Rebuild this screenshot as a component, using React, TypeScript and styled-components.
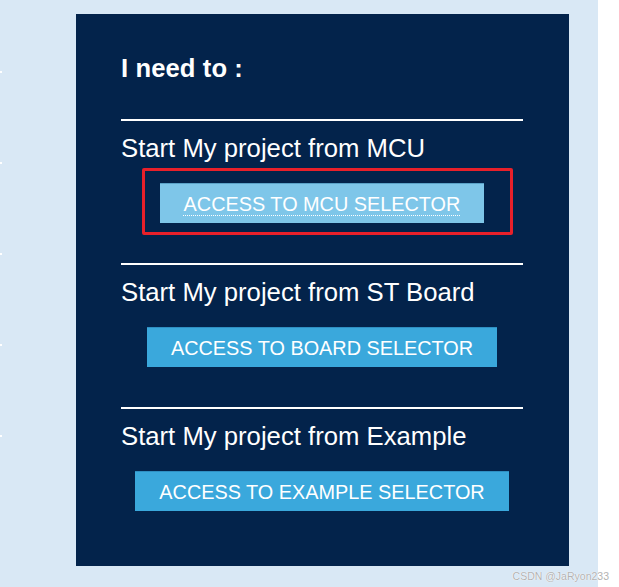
import React from "react";
import styled, { createGlobalStyle } from "styled-components";

const GlobalStyle = createGlobalStyle`
  html, body {
    margin: 0;
    padding: 0;
    background: #ffffff;
  }
  body {
    font-family: "Liberation Sans", Arial, sans-serif;
  }
`;

const Page = styled.div`
  position: relative;
  display: flex;
  width: 619px;
  height: 587px;
  background: #ffffff;
  overflow: hidden;
`;

const Canvas = styled.div`
  display: flex;
  align-items: flex-start;
  width: 598px;
  height: 587px;
  background: #d9e8f5;
`;

const Ticks = styled.div`
  display: flex;
  flex-direction: column;
  gap: 89px;
  width: 2px;
  padding-top: 71px;
`;

const Tick = styled.span`
  display: block;
  width: 2px;
  height: 2px;
  background: #ffffff;
`;

const Panel = styled.section`
  box-sizing: border-box;
  width: 493px;
  height: 552px;
  margin: 14px 0 0 74px;
  padding: 39px 46px 0 45px;
  background: #03234b;
  color: #ffffff;
  display: flex;
  flex-direction: column;
`;

const Heading = styled.h2`
  margin: 0 0 36px;
  font-size: 25.6px;
  line-height: 30px;
  font-weight: 700;
  letter-spacing: 0.1px;
`;

const Section = styled.div`
  display: flex;
  flex-direction: column;
  margin-bottom: 40px;
`;

const Divider = styled.hr`
  margin: 0;
  border: 0;
  height: 2px;
  background: #ffffff;
`;

const Title = styled.h3`
  margin: 12px 0 20px;
  font-size: 25.7px;
  line-height: 30px;
  font-weight: 400;
`;

const ButtonRow = styled.div`
  display: flex;
  justify-content: center;
`;

const Anchor = styled.div`
  position: relative;
  display: inline-flex;
`;

const Button = styled.a<{ $active?: boolean }>`
  box-sizing: border-box;
  display: inline-block;
  height: 40px;
  padding: 0 24px;
  font-size: 19.85px;
  line-height: 40px;
  color: #ffffff;
  white-space: nowrap;
  text-decoration: none;
  cursor: pointer;
  background: ${(p) => (p.$active ? "#7ec6e9" : "#3aa8dc")};
  border-top: 1px solid ${(p) => (p.$active ? "#5aa2c8" : "#2f8fc2")};
`;

const ButtonLabel = styled.span<{ $active?: boolean }>`
  text-decoration: ${(p) => (p.$active ? "underline dotted #ffffff" : "none")};
  text-decoration-thickness: 1px;
  text-underline-offset: 4px;
`;

const Highlight = styled.span`
  position: absolute;
  left: -18px;
  top: -15px;
  right: -29px;
  bottom: -12px;
  border: 3px solid #e8202a;
  border-radius: 2px;
  pointer-events: none;
`;

const Watermark = styled.span`
  position: absolute;
  right: 10px;
  bottom: 5px;
  font-family: "Liberation Sans", Arial, sans-serif;
  font-size: 10.5px;
  line-height: 12px;
  color: #b2b2b2;
  text-shadow: 0 0 1px #ffffff, 0 0 1px #ffffff;
`;

type Item = { title: string; action: string; active?: boolean };

const items: Item[] = [
  { title: "Start My project from MCU", action: "ACCESS TO MCU SELECTOR", active: true },
  { title: "Start My project from ST Board", action: "ACCESS TO BOARD SELECTOR" },
  { title: "Start My project from Example", action: "ACCESS TO EXAMPLE SELECTOR" },
];

export default function App() {
  return (
    <>
      <GlobalStyle />
      <Page>
        <Canvas>
          <Ticks>
            {[0, 1, 2, 3, 4].map((i) => (
              <Tick key={i} />
            ))}
          </Ticks>
          <Panel>
            <Heading>I need to :</Heading>
            {items.map((it) => (
              <Section key={it.action}>
                <Divider />
                <Title>{it.title}</Title>
                <ButtonRow>
                  <Anchor>
                    <Button $active={it.active}>
                      <ButtonLabel $active={it.active}>{it.action}</ButtonLabel>
                    </Button>
                    {it.active && <Highlight />}
                  </Anchor>
                </ButtonRow>
              </Section>
            ))}
          </Panel>
        </Canvas>
        <Watermark>CSDN @JaRyon233</Watermark>
      </Page>
    </>
  );
}
